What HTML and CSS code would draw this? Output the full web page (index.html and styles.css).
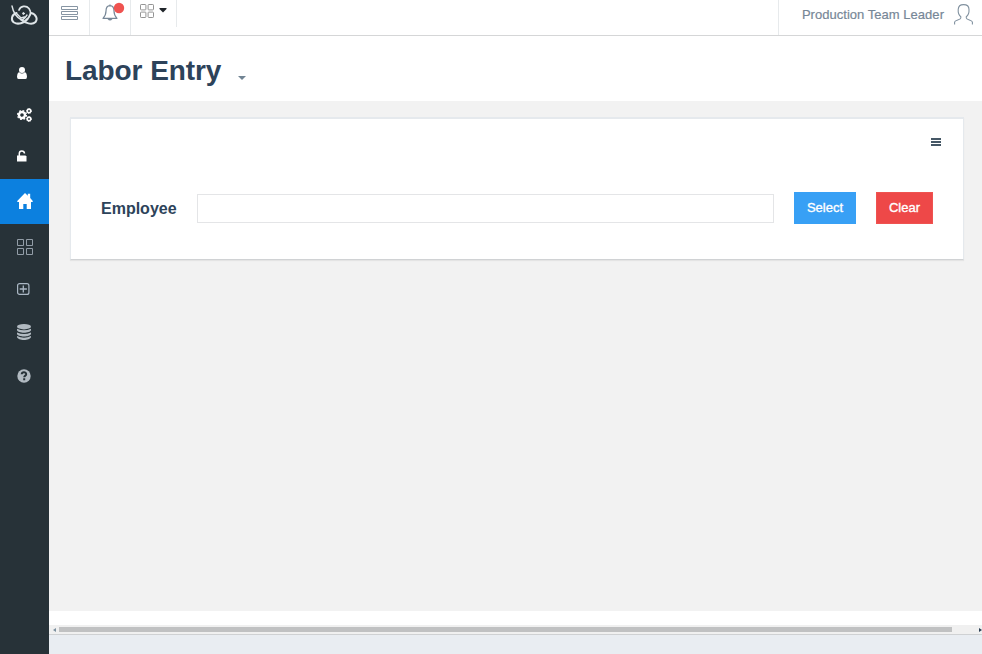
FILE: index.html
```html
<!DOCTYPE html>
<html lang="en">
<head>
<meta charset="utf-8">
<title>Labor Entry</title>
<link rel="stylesheet" href="styles.css">
</head>
<body>
<div class="app">
  <aside class="sidebar">
    <div class="logo">
      <svg width="28" height="24" viewBox="0 0 28 24" fill="none" stroke="#dfe5e8" stroke-linecap="round">
        <path stroke-width="1.700" d="M9 7C10.500 3 16 2 19 5.500C22 9.500 20 14 15.500 18"/>
        <path stroke-width="2" d="M6.500 10C1.500 11.500 .5 17 4 19.500C8 22 14 20 17.500 16"/>
        <path stroke-width="2" d="M21 10C26 11 28 16 25.500 19C22 22.500 15 20 11 16.500"/>
        <path stroke-width="1.400" d="M2 3C3 8 6 14 11 16.500C13 17.500 15 15 17 12"/>
        <path stroke-width="1.500" d="M7 11L11 15L14.500 14"/>
        <circle cx="13.500" cy="10.500" r=".9" fill="#dfe5e8"/>
      </svg>
    </div>
    <nav class="menu">
      <a class="item"><svg width="10" height="12" viewBox="0 0 10 12" fill="#fff"><circle cx="5" cy="3" r="3"/><path d="M2 5Q5 8 8 5Q10 6 10 9.500Q10 12 8.500 12H1.500Q0 12 0 9.500Q0 6 2 5Z"/></svg></a>
      <a class="item"><svg width="15" height="14" viewBox="0 0 15 14" fill="none" stroke="#fff"><circle cx="5" cy="7" r="3" stroke-width="2.400"/><circle cx="5" cy="7" r="4.500" stroke-width="1.200" stroke-dasharray="1.800 1.730"/><circle cx="12" cy="3" r="1.700" stroke-width="1.500"/><circle cx="12" cy="3" r="2.500" stroke-width="1" stroke-dasharray="1.200 .76"/><circle cx="12" cy="11" r="1.700" stroke-width="1.500"/><circle cx="12" cy="11" r="2.500" stroke-width="1" stroke-dasharray="1.200 .76"/></svg></a>
      <a class="item unlock"><svg width="10" height="12" viewBox="0 0 10 12" fill="none"><path fill="#fff" d="M0 5.500H8.500L9.500 6.500V11.500H0Z"/><path stroke="#fff" stroke-width="1.500" d="M2.300 6V3.500C2.300 0 7.200 0 7.500 3.500"/></svg></a>
      <a class="item active"><svg width="16" height="16" viewBox="0 0 16 16" fill="#fff"><path d="M8 0L10.800 2.700V.8H13.200V5L16 8.200L15.300 9H14V16H9.700V11H6.300V16H2V9H.7L0 8.200Z"/></svg></a>
      <a class="item grid"><svg width="16" height="16" viewBox="0 0 16 16" fill="none" stroke="#929da7"><path d="M.5 .5H6.500V6.500H.5ZM9.500 .5H15.500V6.500H9.500ZM.5 9.500H6.500V15.500H.5ZM9.500 9.500H15.500V15.500H9.500Z"/></svg></a>
      <a class="item plus"><svg width="13" height="12" viewBox="0 0 13 12" fill="none" stroke="#aab7c4"><rect x=".6" y=".6" width="11.300" height="10.800" rx="2" stroke-width="1.200"/><path stroke-width="1.300" d="M6.300 2.500V9.500M2.700 6H9.900"/></svg></a>
      <a class="item db"><svg width="14" height="16" viewBox="0 0 14 16" fill="#b1bac1"><ellipse cx="7" cy="2.700" rx="7" ry="2.700"/><path d="M0 4.700Q7 8 14 4.700V6.200C13 9.500 1 9.500 0 6.200ZM0 8.400Q7 11.700 14 8.400V9.900C13 13.200 1 13.200 0 9.900ZM0 12.100Q7 15.400 14 12.100V13C13 17 1 17 0 13Z"/></svg></a>
      <a class="item"><svg width="14" height="14" viewBox="0 0 14 14" fill="none"><circle cx="7" cy="7" r="6.700" fill="#b1bac1"/><path stroke="#273238" stroke-width="2" d="M4.700 5.300C4.800 2.600 9.200 2.600 9.200 5.200C9.200 6.700 7.200 6.500 7.200 8.300M7.200 9.300V11.200"/></svg></a>
    </nav>
  </aside>
  <div class="main">
    <header class="topbar">
      <div class="tool list"><svg width="17" height="15" viewBox="0 0 17 15" fill="none" stroke="#8795a3"><path d="M.5 .5H16.500V3.500H.5ZM.5 5.500H16.500V8.500H.5ZM.5 10.500H16.500V13.500H.5Z"/></svg></div>
      <div class="tool bell"><svg width="24" height="19" viewBox="0 0 24 19" fill="none"><path stroke="#778797" stroke-width="1.200" stroke-linejoin="round" d="M8 3.700C4.800 3.900 4 6.500 4 9C4 12.500 3 14.300 1 16.300H15C13 14.300 12 12.500 12 9C12 6.500 11.200 3.900 8 3.700V2.500"/><path fill="#778797" d="M5.500 17H10.500Q8 20 5.500 17Z"/><circle cx="17" cy="6" r="5.200" fill="#ef5350"/></svg></div>
      <div class="tool apps"><svg width="14" height="14" viewBox="0 0 14 14" fill="none" stroke="#949494"><rect x=".5" y=".5" width="5.400" height="5.400" rx=".7"/><rect x="8.100" y=".5" width="5.400" height="5.400" rx=".7"/><rect x=".5" y="8.100" width="5.400" height="5.400" rx=".7"/><rect x="8.100" y="8.100" width="5.400" height="5.400" rx=".7"/></svg><svg class="caret" width="8" height="5" viewBox="0 0 8 5" fill="#20252a"><path d="M.5 0H7.500V1L4 4.500L.5 1Z"/></svg></div>
      <div class="user"><span>Production Team Leader</span><svg width="19" height="21" viewBox="0 0 19 21" fill="none" stroke="#8292a0" stroke-width="1.100"><path d="M.6 20.500V18C.8 16 6.800 16 6.800 14V12.800C4.500 11 4 8.500 4.200 5.500C4.400 1.500 7.500 .6 9.500 .6C13 .6 15 2 15 5.500C15.200 8.500 14.500 11 12.300 12.800V14C12.300 16 18.200 16 18.400 18V20.500"/></svg></div>
    </header>
    <div class="heading"><h1>Labor Entry</h1><svg width="8" height="4" viewBox="0 0 8 4" fill="#718493"><path d="M0 0H8L4 4Z"/></svg></div>
    <main class="content">
      <section class="card">
        <div class="card-tools"><svg width="10" height="8" viewBox="0 0 10 8" fill="#455766"><path d="M0 0H10V2H0ZM0 3H10V5H0ZM0 6H10V8H0Z"/></svg></div>
        <div class="form-row">
          <label for="employee">Employee</label>
          <input id="employee" type="text">
          <button class="select" type="button">Select</button>
          <button class="clear" type="button">Clear</button>
        </div>
      </section>
    </main>
    <div class="spacer"></div>
    <div class="scrollbar"><svg width="3" height="4" viewBox="0 0 3 4" fill="#7c909f"><path d="M0 2L3 0V4Z"/></svg><div class="thumb"></div><svg class="right" width="3" height="4" viewBox="0 0 3 4" fill="#2b4055"><path d="M0 0L3 2L0 4Z"/></svg></div>
    <footer></footer>
  </div>
</div>
</body>
</html>
```
FILE: styles.css
```css
* { box-sizing: border-box; }
body { margin: 0; font-family: "Liberation Sans", Arial, sans-serif; overflow: hidden; }
svg { display: block; flex: none; }
.app { display: flex; width: 982px; height: 654px; }
.sidebar { width: 49px; background: #273238; flex: none; }
.logo { height: 52px; padding: 3px 0 0 10px; }
.menu { display: flex; flex-direction: column; }
.item { display: flex; align-items: center; height: 42px; padding-left: 17px; }
.item.unlock { padding-bottom: 2px; }
.item.active { height: 45px; background: #0c80df; margin-top: 1px; padding-bottom: 1px; }
.item.grid { height: 46px; }
.item.plus { height: 39px; padding-bottom: 1px; }
.item.db { height: 46px; }
.main { flex: 1; display: flex; flex-direction: column; min-width: 0; background: #fff; }
.topbar { display: flex; height: 36px; border-bottom: 1px solid #d5d6d7; flex: none; }
.tool { display: flex; align-items: flex-start; border-right: 1px solid #e7eaec; }
.list { width: 41px; padding: 6px 0 0 11.5px; }
.bell { width: 41px; padding: 2px 0 0 12px; }
.apps { width: 46px; height: 27px; padding: 4px 0 0 9px; }
.caret { margin: 4px 0 0 5px; }
.user { margin-left: auto; width: 204px; border-left: 1px solid #e7eaec; display: flex; padding: 4px 9px 0 0; justify-content: flex-end; gap: 10px; color: #778797; font-size: 13px; line-height: 21px; -webkit-text-stroke: .2px #778797; }
.user span { letter-spacing: .03px; }
.user svg { -webkit-text-stroke: 0; }
.heading { height: 65px; flex: none; display: flex; padding-left: 16px; }
h1 { margin: 0; width: 157px; font-size: 28px; line-height: 32px; padding-top: 19px; color: #2d435a; letter-spacing: -.07px; white-space: nowrap; }
.heading svg { margin: 40px 0 0 16px; }
.content { height: 510px; flex: none; background: #f2f2f2; padding: 16px 18px 0 21px; }
.card { height: 143px; background: #fff; border: 1px solid #e5e9ed; border-top-width: 2px; border-bottom-color: #d0d2d4; box-shadow: 0 1px 1px #e4e4e4; padding: 19px 30px 0; }
.card-tools { display: flex; justify-content: flex-end; margin-right: -8px; height: 54px; }
.form-row { display: flex; align-items: center; height: 32px; }
label { width: 96px; padding-top: 2px; font-size: 16px; font-weight: 600; color: #2d435a; }
input { width: 577px; height: 29px; border: 1px solid #e4e5e7; padding: 0 8px; background: #fff; }
button { height: 32px; border: 0; padding: 0 0 2px; margin-left: 20px; font: 13px "Liberation Sans", Arial, sans-serif; color: #fff; -webkit-text-stroke: .35px #fff; }
.select { width: 62px; background: #38a0f5; }
.clear { width: 57px; background: #ee4848; border: 1px solid #ef5350; }
.spacer { height: 14px; flex: none; }
.scrollbar { height: 10px; flex: none; display: flex; align-items: center; background: #f0f0f0; border-bottom: 1px solid #cfd1d3; padding-left: 4px; }
.thumb { width: 893px; height: 5px; background: #c0c1c2; margin-left: 3px; }
.right { margin-left: auto; }
footer { flex: 1; background: #e9edf2; }
```
